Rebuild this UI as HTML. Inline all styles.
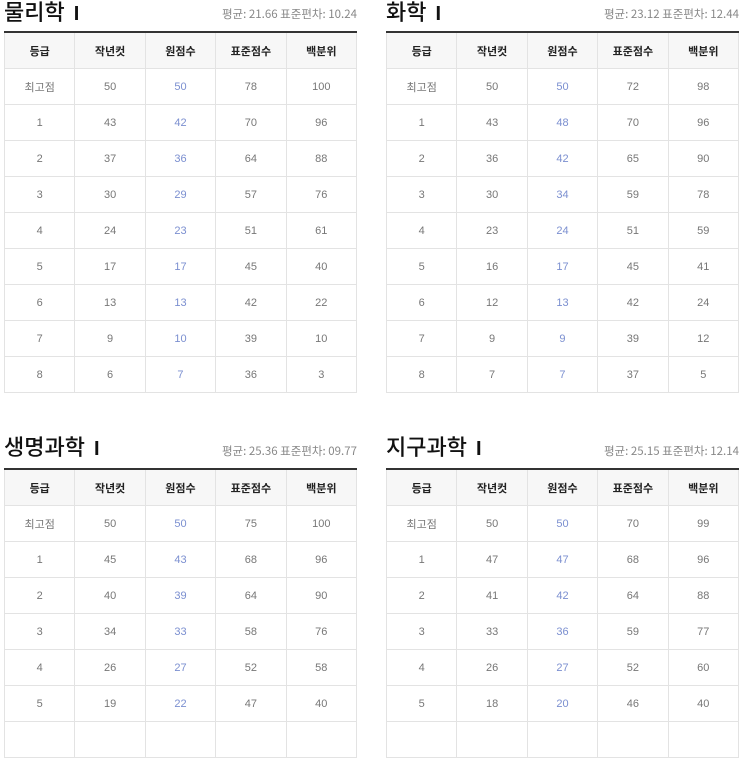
<!DOCTYPE html><html><head><meta charset="utf-8"><style>
body{margin:0;width:743px;height:727px;overflow:hidden;background:#fff;font-family:"Liberation Sans","Noto Sans CJK KR",sans-serif;position:relative}
.sec{position:absolute;width:353px}
.t{position:absolute;left:0;font-size:22px;font-weight:500;color:#111;line-height:24px;white-space:nowrap;font-family:"Noto Sans CJK KR",sans-serif}
.t b{font-family:"Liberation Sans",sans-serif;font-weight:bold;font-size:20px;margin-left:9px}
.s{position:absolute;right:0;font-size:11.5px;color:#888;line-height:14px;white-space:nowrap;font-family:"Noto Sans CJK KR",sans-serif}
table{position:absolute;left:0;border-collapse:collapse;width:353px;table-layout:fixed;border-top:2px solid #333}
td,th{border:1px solid #e3e3e3;height:35px;padding:0;text-align:center;font-size:11px;color:#777;font-weight:normal}
th{background:#f7f7f7;color:#222;font-weight:bold;font-size:11px}
td:nth-child(3){color:#7b8fd0}
</style></head><body>
<div class="sec" style="left:4px;top:0">
<div class="t" style="top:-1px">물리학<b>I</b></div><div class="s" style="top:7px">평균: 21.66 표준편차: 10.24</div>
<table style="top:31px"><tr><th>등급</th><th>작년컷</th><th>원점수</th><th>표준점수</th><th>백분위</th></tr>
<tr><td>최고점</td><td>50</td><td>50</td><td>78</td><td>100</td></tr>
<tr><td>1</td><td>43</td><td>42</td><td>70</td><td>96</td></tr>
<tr><td>2</td><td>37</td><td>36</td><td>64</td><td>88</td></tr>
<tr><td>3</td><td>30</td><td>29</td><td>57</td><td>76</td></tr>
<tr><td>4</td><td>24</td><td>23</td><td>51</td><td>61</td></tr>
<tr><td>5</td><td>17</td><td>17</td><td>45</td><td>40</td></tr>
<tr><td>6</td><td>13</td><td>13</td><td>42</td><td>22</td></tr>
<tr><td>7</td><td>9</td><td>10</td><td>39</td><td>10</td></tr>
<tr><td>8</td><td>6</td><td>7</td><td>36</td><td>3</td></tr></table></div>
<div class="sec" style="left:386px;top:0">
<div class="t" style="top:-1px">화학<b>I</b></div><div class="s" style="top:7px">평균: 23.12 표준편차: 12.44</div>
<table style="top:31px"><tr><th>등급</th><th>작년컷</th><th>원점수</th><th>표준점수</th><th>백분위</th></tr>
<tr><td>최고점</td><td>50</td><td>50</td><td>72</td><td>98</td></tr>
<tr><td>1</td><td>43</td><td>48</td><td>70</td><td>96</td></tr>
<tr><td>2</td><td>36</td><td>42</td><td>65</td><td>90</td></tr>
<tr><td>3</td><td>30</td><td>34</td><td>59</td><td>78</td></tr>
<tr><td>4</td><td>23</td><td>24</td><td>51</td><td>59</td></tr>
<tr><td>5</td><td>16</td><td>17</td><td>45</td><td>41</td></tr>
<tr><td>6</td><td>12</td><td>13</td><td>42</td><td>24</td></tr>
<tr><td>7</td><td>9</td><td>9</td><td>39</td><td>12</td></tr>
<tr><td>8</td><td>7</td><td>7</td><td>37</td><td>5</td></tr></table></div>
<div class="sec" style="left:4px;top:436px">
<div class="t" style="top:-2px">생명과학<b>I</b></div><div class="s" style="top:8px">평균: 25.36 표준편차: 09.77</div>
<table style="top:32px"><tr><th>등급</th><th>작년컷</th><th>원점수</th><th>표준점수</th><th>백분위</th></tr>
<tr><td>최고점</td><td>50</td><td>50</td><td>75</td><td>100</td></tr>
<tr><td>1</td><td>45</td><td>43</td><td>68</td><td>96</td></tr>
<tr><td>2</td><td>40</td><td>39</td><td>64</td><td>90</td></tr>
<tr><td>3</td><td>34</td><td>33</td><td>58</td><td>76</td></tr>
<tr><td>4</td><td>26</td><td>27</td><td>52</td><td>58</td></tr>
<tr><td>5</td><td>19</td><td>22</td><td>47</td><td>40</td></tr>
<tr><td>&nbsp;</td><td></td><td></td><td></td><td></td></tr></table></div>
<div class="sec" style="left:386px;top:436px">
<div class="t" style="top:-2px">지구과학<b>I</b></div><div class="s" style="top:8px">평균: 25.15 표준편차: 12.14</div>
<table style="top:32px"><tr><th>등급</th><th>작년컷</th><th>원점수</th><th>표준점수</th><th>백분위</th></tr>
<tr><td>최고점</td><td>50</td><td>50</td><td>70</td><td>99</td></tr>
<tr><td>1</td><td>47</td><td>47</td><td>68</td><td>96</td></tr>
<tr><td>2</td><td>41</td><td>42</td><td>64</td><td>88</td></tr>
<tr><td>3</td><td>33</td><td>36</td><td>59</td><td>77</td></tr>
<tr><td>4</td><td>26</td><td>27</td><td>52</td><td>60</td></tr>
<tr><td>5</td><td>18</td><td>20</td><td>46</td><td>40</td></tr>
<tr><td>&nbsp;</td><td></td><td></td><td></td><td></td></tr></table></div>
</body></html>
